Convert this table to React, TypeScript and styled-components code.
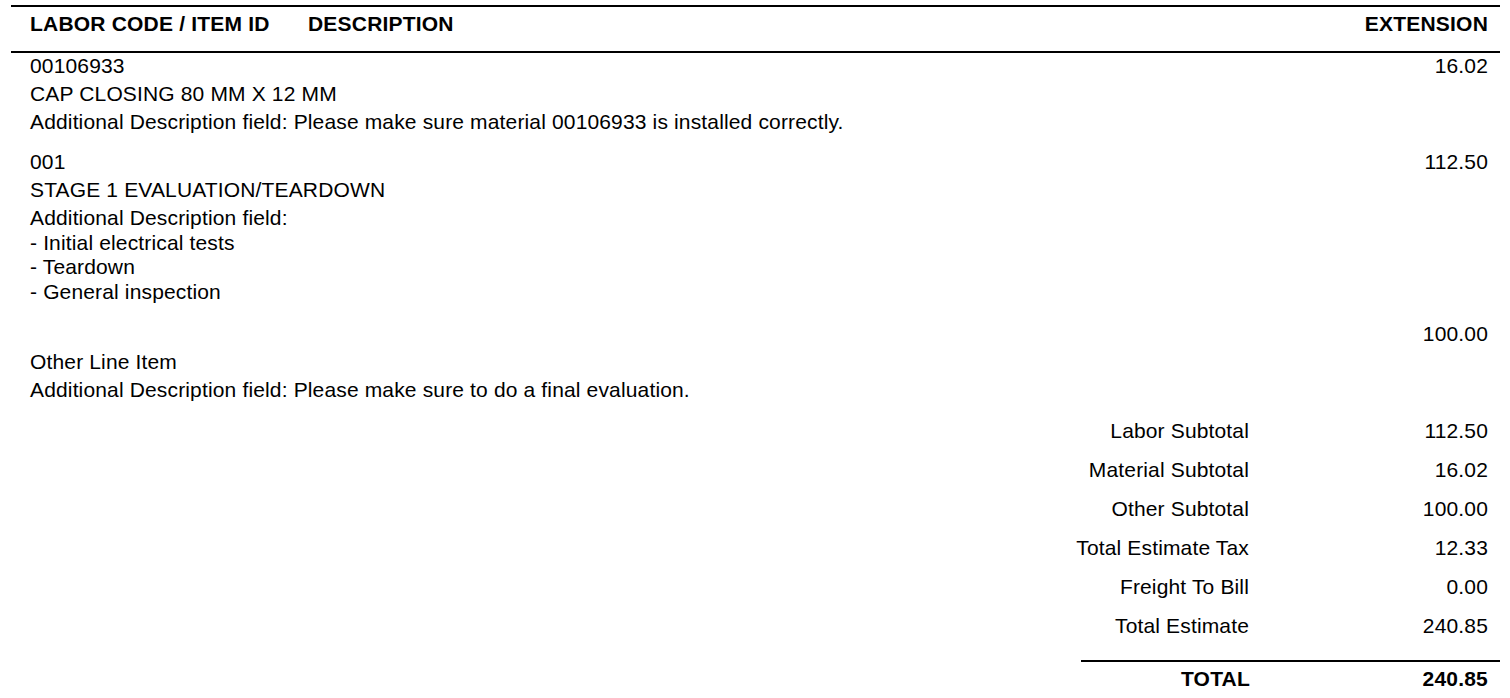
import React from 'react';
import styled, { createGlobalStyle } from 'styled-components';

const GlobalStyle = createGlobalStyle`
  html, body {
    margin: 0;
    padding: 0;
    background: #fff;
  }
  body {
    font-family: "Liberation Sans", Arial, sans-serif;
    color: #000;
  }
`;

const Page = styled.div`
  width: 1489px;
  margin-left: 11px;
  padding-top: 5px;
  font-size: 21px;
  line-height: 24px;
  letter-spacing: 0.15px;
`;

const HeaderRow = styled.div`
  display: grid;
  grid-template-columns: 278px 1fr 220px;
  border-top: 2px solid #000;
  border-bottom: 2px solid #000;
  padding: 5px 12px 15px 19px;
  font-weight: bold;
  letter-spacing: 0.2px;
`;

const HeaderCell = styled.div<{ $right?: boolean }>`
  text-align: ${(p) => (p.$right ? 'right' : 'left')};
`;

const Items = styled.div`
  display: flex;
  flex-direction: column;
  gap: 12px;
  padding-top: 1px;
`;

const ItemRow = styled.div`
  display: grid;
  grid-template-columns: 1fr 220px;
  padding: 0 12px 0 19px;
`;

const ItemText = styled.div`
  display: flex;
  flex-direction: column;
`;

const Field = styled.div<{ $multi?: boolean }>`
  min-height: 24px;
  padding-bottom: ${(p) => (p.$multi ? '6px' : '4px')};
  line-height: ${(p) => (p.$multi ? '24.5px' : '24px')};
  white-space: pre-line;
`;

const Amount = styled.div`
  text-align: right;
`;

const Summary = styled.div`
  display: flex;
  flex-direction: column;
  align-items: flex-end;
  padding-top: 13px;
`;

const SummaryRow = styled.div`
  display: grid;
  grid-template-columns: 300px 251px;
  height: 39px;
`;

const SummaryLabel = styled.div`
  text-align: right;
`;

const SummaryValue = styled.div`
  text-align: right;
  padding-right: 12px;
`;

const TotalRow = styled.div`
  display: grid;
  grid-template-columns: 169px 250px;
  width: 419px;
  margin-top: 7px;
  border-top: 2px solid #000;
  padding-top: 5px;
  font-weight: bold;
  letter-spacing: 0.2px;
`;

interface LineItem {
  code: string;
  description: string;
  additional: string;
  extension: string;
}

const items: LineItem[] = [
  {
    code: '00106933',
    description: 'CAP CLOSING 80 MM X 12 MM',
    additional: 'Additional Description field: Please make sure material 00106933 is installed correctly.',
    extension: '16.02',
  },
  {
    code: '001',
    description: 'STAGE 1 EVALUATION/TEARDOWN',
    additional: 'Additional Description field:\n- Initial electrical tests\n- Teardown\n- General inspection',
    extension: '112.50',
  },
  {
    code: '',
    description: 'Other Line Item',
    additional: 'Additional Description field: Please make sure to do a final evaluation.',
    extension: '100.00',
  },
];

const totals: [string, string][] = [
  ['Labor Subtotal', '112.50'],
  ['Material Subtotal', '16.02'],
  ['Other Subtotal', '100.00'],
  ['Total Estimate Tax', '12.33'],
  ['Freight To Bill', '0.00'],
  ['Total Estimate', '240.85'],
];

const App = () => {
  return (
    <>
      <GlobalStyle />
      <Page>
        <HeaderRow>
          <HeaderCell>LABOR CODE / ITEM ID</HeaderCell>
          <HeaderCell>DESCRIPTION</HeaderCell>
          <HeaderCell $right>EXTENSION</HeaderCell>
        </HeaderRow>

        <Items>
          {items.map((item, i) => (
            <ItemRow key={i}>
              <ItemText>
                <Field>{item.code}</Field>
                <Field>{item.description}</Field>
                <Field $multi={item.additional.includes('\n')}>{item.additional}</Field>
              </ItemText>
              <Amount>{item.extension}</Amount>
            </ItemRow>
          ))}
        </Items>

        <Summary>
          {totals.map(([label, value]) => (
            <SummaryRow key={label}>
              <SummaryLabel>{label}</SummaryLabel>
              <SummaryValue>{value}</SummaryValue>
            </SummaryRow>
          ))}
          <TotalRow>
            <SummaryLabel>TOTAL</SummaryLabel>
            <SummaryValue>240.85</SummaryValue>
          </TotalRow>
        </Summary>
      </Page>
    </>
  );
};

export default App;
